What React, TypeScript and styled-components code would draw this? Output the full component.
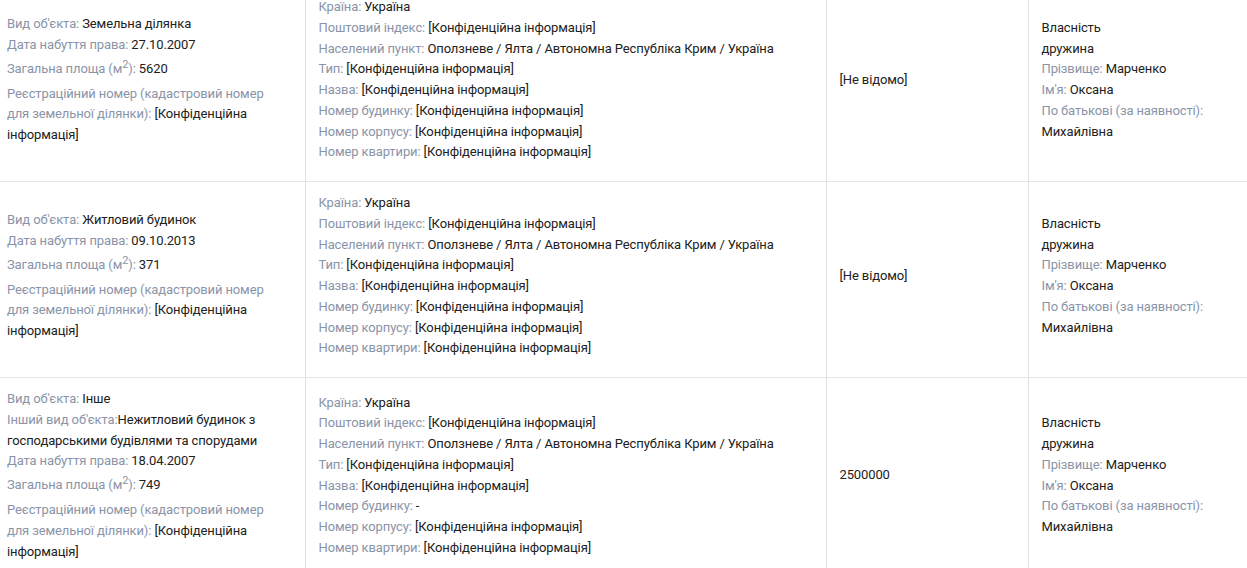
import React from "react";
import styled, { createGlobalStyle } from "styled-components";

const GlobalStyle = createGlobalStyle`
  html, body {
    margin: 0;
    padding: 0;
    background: #fff;
  }
  body {
    font-family: Roboto, "Liberation Sans", Arial, sans-serif;
    font-size: 13px;
    line-height: 20.75px;
    letter-spacing: -0.12px;
    color: #212121;
    overflow: hidden;
  }
`;

const Scroller = styled.div`
  margin-top: -15px;
`;

const Table = styled.table`
  width: 1247px;
  border-collapse: collapse;
  table-layout: fixed;
`;

const Row = styled.tr`
  border-top: 1px solid #e3e4e8;
`;

const Cell = styled.td<{ $first?: boolean }>`
  vertical-align: middle;
  padding: ${(p) => (p.$first ? "11px 24px 18px 7px" : "11px 12px 18px 13px")};
  border-left: ${(p) => (p.$first ? "none" : "1px solid #e0e1e7")};
`;

const Line = styled.div``;

const Label = styled.span`
  color: #8a94a8;
`;

const Value = styled.span`
  color: #212121;
`;

const RegBlock = styled.div`
  margin-top: 4px;
`;

const Sup = styled.sup`
  font-size: 11px;
  line-height: 17px;
`;

type Obj = {
  kind: string;
  otherKind?: string;
  date: string;
  area: string;
  house: string;
  cost: string;
};

const CONF = "[Конфіденційна інформація]";

const rows: Obj[] = [
  { kind: "Земельна ділянка", date: "27.10.2007", area: "5620", house: CONF, cost: "[Не відомо]" },
  { kind: "Житловий будинок", date: "09.10.2013", area: "371", house: CONF, cost: "[Не відомо]" },
  {
    kind: "Інше",
    otherKind: "Нежитловий будинок з господарськими будівлями та спорудами",
    date: "18.04.2007",
    area: "749",
    house: "-",
    cost: "2500000",
  },
];

const Field = ({ label, value, sep = ": " }: { label: string; value: string; sep?: string }) => (
  <Line>
    <Label>
      {label}
      {sep}
    </Label>
    <Value>{value}</Value>
  </Line>
);

const ObjectCell = ({ o }: { o: Obj }) => (
  <Cell $first>
    <Field label="Вид об'єкта" value={o.kind} />
    {o.otherKind && <Field label="Інший вид об'єкта" sep=":" value={o.otherKind} />}
    <Field label="Дата набуття права" value={o.date} />
    <Line>
      <Label>
        Загальна площа (м<Sup>2</Sup>):{" "}
      </Label>
      <Value>{o.area}</Value>
    </Line>
    <RegBlock>
      <Label>Реєстраційний номер (кадастровий номер для земельної ділянки): </Label>
      <Value>{CONF}</Value>
    </RegBlock>
  </Cell>
);

const AddressCell = ({ o }: { o: Obj }) => (
  <Cell>
    <Field label="Країна" value="Україна" />
    <Field label="Поштовий індекс" value={CONF} />
    <Field label="Населений пункт" value="Оползневе / Ялта / Автономна Республіка Крим / Україна" />
    <Field label="Тип" value={CONF} />
    <Field label="Назва" value={CONF} />
    <Field label="Номер будинку" value={o.house} />
    <Field label="Номер корпусу" value={CONF} />
    <Field label="Номер квартири" value={CONF} />
  </Cell>
);

const OwnerCell = () => (
  <Cell>
    <Line>Власність</Line>
    <Line>дружина</Line>
    <Field label="Прізвище" value="Марченко" />
    <Field label="Ім'я" value="Оксана" />
    <Line>
      <Label>По батькові (за наявності): </Label>
      <Value>Михайлівна</Value>
    </Line>
  </Cell>
);

const App = () => (
  <>
    <GlobalStyle />
    <Scroller>
      <Table>
        <colgroup>
          <col style={{ width: 305 }} />
          <col style={{ width: 521 }} />
          <col style={{ width: 202 }} />
          <col />
        </colgroup>
        <tbody>
          {rows.map((o, i) => (
            <Row key={i}>
              <ObjectCell o={o} />
              <AddressCell o={o} />
              <Cell>{o.cost}</Cell>
              <OwnerCell />
            </Row>
          ))}
        </tbody>
      </Table>
    </Scroller>
  </>
);

export default App;
